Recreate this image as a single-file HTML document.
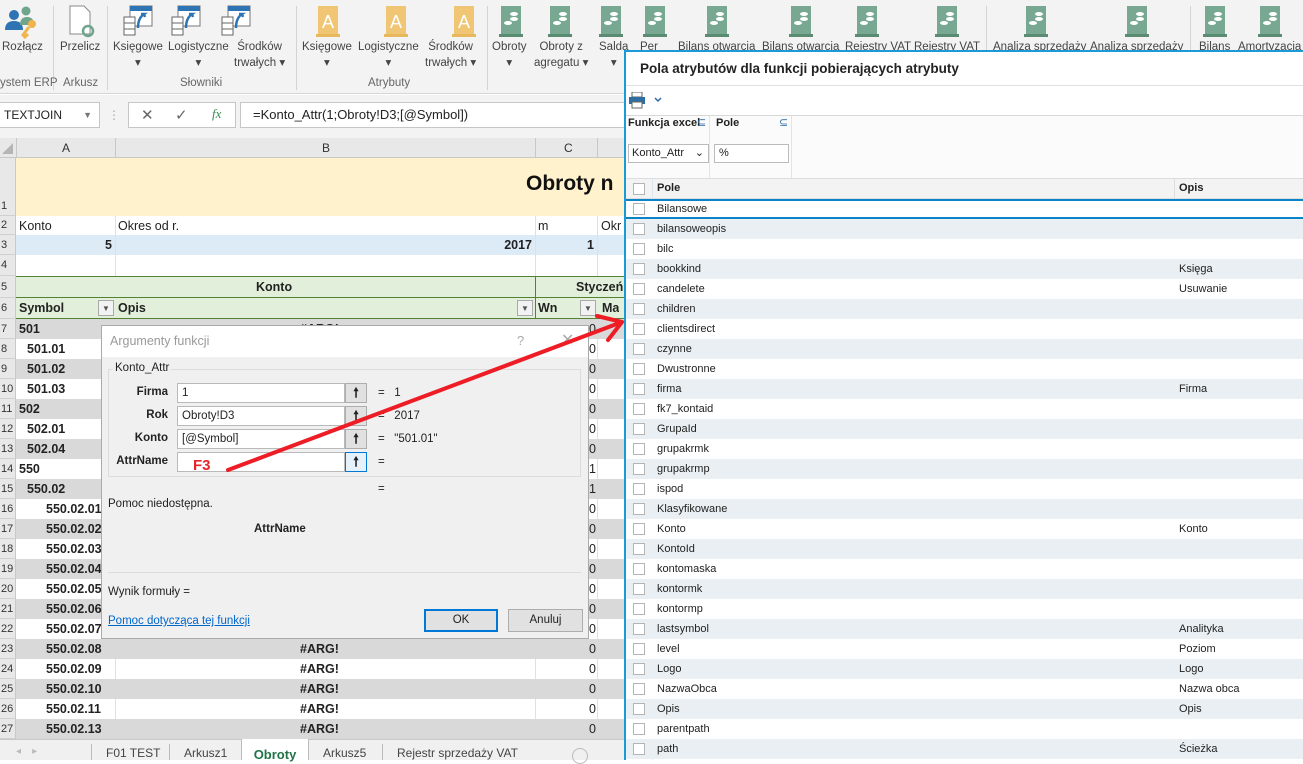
<!DOCTYPE html>
<html><head><meta charset="utf-8"><style>
*{box-sizing:border-box;margin:0;padding:0}
body{width:1303px;height:760px;overflow:hidden;position:relative;background:#fff;font-family:"Liberation Sans",sans-serif;font-size:12px;color:#222}
.a{position:absolute}
.rl{position:absolute;font-size:11.5px;color:#444;text-align:center;white-space:nowrap;line-height:16px}
.sep{position:absolute;top:6px;width:1px;height:84px;background:#d4d4d4}
.cell{position:absolute;height:20px;line-height:20px;font-weight:bold;font-size:12.5px;white-space:nowrap;overflow:hidden}
.rh{position:absolute;left:0;width:16px;font-size:11px;color:#333;background:#e8e8e8;border-right:1px solid #c8c8c8;border-bottom:1px solid #d0d0d0;text-align:left;padding-left:1px}
.prow{position:absolute;left:626px;width:677px;height:20px;line-height:20px;font-size:11px;color:#222}
.cb{position:absolute;left:7px;top:4px;width:12px;height:12px;border:1px solid #b5b5b5;background:#fff}
.fl{position:absolute;font-size:11.5px;text-align:right;font-weight:bold;width:60px}
.inp{position:absolute;left:177px;width:168px;height:20px;background:#fff;border:1px solid #b9b9b9;font-size:11.5px;line-height:18px;padding-left:4px}
.btn{position:absolute;left:345px;width:22px;height:20px;background:#e1e1e1;border:1px solid #adadad;font-size:13px;text-align:center;line-height:18px;font-weight:bold}
.eq{position:absolute;left:378px;font-size:11.5px}
</style></head><body>

<!-- Ribbon -->
<div class="a" style="left:0;top:0;width:1303px;height:94px;background:#f3f3f3;border-bottom:1px solid #d6d6d6"></div>
<div class="sep" style="left:53px"></div><div class="sep" style="left:107px"></div><div class="sep" style="left:296px"></div><div class="sep" style="left:487px"></div><div class="sep" style="left:986px"></div><div class="sep" style="left:1190px"></div>
<svg class="a" style="left:0;top:0" width="1303" height="46">
 <circle cx="14" cy="15" r="5" fill="#2e74b5"/><path d="M5 30 q0-9 9-9 q9 0 9 9z" fill="#2e74b5"/>
 <circle cx="26" cy="11" r="4.5" fill="#6fa58c"/><path d="M20 25 q0-8 7-8 q7 0 7 8z" fill="#6fa58c"/>
 <circle cx="32" cy="24" r="4" fill="#f1b44c"/><path d="M29 27 l-6 8 l2 2 l3-3" stroke="#f1b44c" stroke-width="3" fill="none"/>
 <path d="M70 6 h14 l6 6 v22 h-20z" fill="#fff" stroke="#888"/><circle cx="88" cy="31" r="5" fill="none" stroke="#6fa58c" stroke-width="2.5"/>
 <g id="t"><rect x="130" y="6" width="22" height="20" fill="#fff" stroke="#777"/><rect x="130" y="6" width="22" height="5" fill="#2e74b5"/><rect x="124" y="17" width="11" height="18" fill="#fff" stroke="#666"/><path d="M124 23h11M124 29h11" stroke="#666"/><path d="M138 28 q0-10 6-14 l-3 0 m3 0 l1 3" stroke="#2e74b5" stroke-width="2.5" fill="none"/></g>
 <use href="#t" x="48"/><use href="#t" x="98"/>
 <g id="y"><rect x="318" y="6" width="20" height="28" fill="#f0c674"/><rect x="316" y="34" width="24" height="3" fill="#e8b85e"/><text x="322" y="28" fill="#fff" font-size="18" font-family="Liberation Sans">A</text></g>
 <use href="#y" x="68"/><use href="#y" x="136"/>
 <g id="g"><rect x="501" y="6" width="20" height="28" fill="#78a892"/><rect x="499" y="34" width="24" height="3" fill="#5c8b74"/><ellipse cx="514" cy="14" rx="4" ry="2" fill="#fff"/><ellipse cx="514" cy="19" rx="4" ry="2" fill="#fff"/><ellipse cx="508" cy="23" rx="4" ry="2" fill="#fff"/></g>
 <use href="#g" x="49"/><use href="#g" x="100"/><use href="#g" x="144"/><use href="#g" x="206"/><use href="#g" x="290"/><use href="#g" x="356"/><use href="#g" x="436"/><use href="#g" x="525"/><use href="#g" x="626"/><use href="#g" x="704"/><use href="#g" x="759"/>
</svg>
<div class="rl" style="left:2px;top:39px">Rozłącz</div>
<div class="rl" style="left:60px;top:39px">Przelicz</div>
<div class="rl" style="left:113px;top:39px">Księgowe<br>▾</div>
<div class="rl" style="left:168px;top:39px">Logistyczne<br>▾</div>
<div class="rl" style="left:234px;top:39px">Środków<br>trwałych ▾</div>
<div class="rl" style="left:302px;top:39px">Księgowe<br>▾</div>
<div class="rl" style="left:358px;top:39px">Logistyczne<br>▾</div>
<div class="rl" style="left:425px;top:39px">Środków<br>trwałych ▾</div>
<div class="rl" style="left:492px;top:39px">Obroty<br>▾</div>
<div class="rl" style="left:534px;top:39px">Obroty z<br>agregatu ▾</div>
<div class="rl" style="left:599px;top:39px">Salda<br>▾</div>
<div class="rl" style="left:0;top:75px;color:#666">ystem ERP</div>
<div class="rl" style="left:63px;top:75px;color:#666">Arkusz</div>
<div class="rl" style="left:180px;top:75px;color:#666">Słowniki</div>
<div class="rl" style="left:368px;top:75px;color:#666">Atrybuty</div>
<div class="rl" style="left:640px;top:39px">Per</div><div class="rl" style="left:678px;top:39px">Bilans otwarcia</div><div class="rl" style="left:762px;top:39px">Bilans otwarcia</div><div class="rl" style="left:845px;top:39px">Rejestry VAT</div><div class="rl" style="left:914px;top:39px">Rejestry VAT</div><div class="rl" style="left:993px;top:39px">Analiza sprzedaży</div><div class="rl" style="left:1090px;top:39px">Analiza sprzedaży</div><div class="rl" style="left:1199px;top:39px">Bilans</div><div class="rl" style="left:1238px;top:39px">Amortyzacja</div>

<!-- formula bar -->
<div class="a" style="left:0;top:95px;width:1303px;height:43px;background:#f3f3f3"></div>
<div class="a" style="left:-2px;top:102px;width:102px;height:26px;background:#fff;border:1px solid #c6c6c6;font-size:12px;line-height:24px;padding-left:5px">TEXTJOIN<span style="position:absolute;right:7px;color:#777;font-size:9px">▼</span></div>
<div class="a" style="left:108px;top:108px;color:#aaa;font-size:12px">⋮</div>
<div class="a" style="left:128px;top:102px;width:108px;height:26px;background:#fff;border:1px solid #c6c6c6"></div>
<div class="a" style="left:141px;top:106px;color:#666;font-size:15px">✕</div>
<div class="a" style="left:175px;top:106px;color:#666;font-size:15px">✓</div>
<div class="a" style="left:212px;top:106px;color:#3b8a4e;font-size:13px;font-style:italic;font-family:'Liberation Serif',serif">fx</div>
<div class="a" style="left:240px;top:102px;width:400px;height:26px;background:#fff;border:1px solid #c6c6c6;font-size:13px;line-height:24px;padding-left:12px">=Konto_Attr(1;Obroty!D3;[@Symbol])</div>

<!-- grid -->
<div class="a" style="left:0;top:138px;width:626px;height:20px;background:#e8e8e8;border-bottom:1px solid #c8c8c8"></div>
<div class="a" style="left:16px;top:138px;width:1px;height:20px;background:#c8c8c8"></div>
<div class="a" style="left:115px;top:138px;width:1px;height:20px;background:#c8c8c8"></div>
<div class="a" style="left:535px;top:138px;width:1px;height:20px;background:#c8c8c8"></div>
<div class="a" style="left:597px;top:138px;width:1px;height:20px;background:#c8c8c8"></div>
<div class="a" style="left:62px;top:141px;font-size:12px;color:#333">A</div>
<div class="a" style="left:322px;top:141px;font-size:12px;color:#333">B</div>
<div class="a" style="left:564px;top:141px;font-size:12px;color:#333">C</div>
<div class="a" style="left:2px;top:143px;width:0;height:0;border-left:11px solid transparent;border-bottom:11px solid #b5b5b5"></div>

<div class="a" style="left:16px;top:158px;width:610px;height:58px;background:#fff2cc"></div>
<div class="a" style="left:526px;top:172px;font-size:21px;font-weight:bold;color:#111">Obroty n</div>
<div class="cell" style="left:19px;top:216px;font-weight:normal">Konto</div>
<div class="cell" style="left:118px;top:216px;font-weight:normal">Okres od r.</div>
<div class="cell" style="left:538px;top:216px;font-weight:normal">m</div>
<div class="cell" style="left:601px;top:216px;font-weight:normal">Okr</div>
<div class="a" style="left:16px;top:235px;width:610px;height:20px;background:#ddebf7"></div>
<div class="cell" style="left:16px;top:235px;width:96px;text-align:right">5</div>
<div class="cell" style="left:116px;top:235px;width:416px;text-align:right">2017</div>
<div class="cell" style="left:536px;top:235px;width:58px;text-align:right">1</div>
<div class="a" style="left:115px;top:216px;width:1px;height:60px;background:#e0e0e0"></div>
<div class="a" style="left:535px;top:216px;width:1px;height:60px;background:#e0e0e0"></div>
<div class="a" style="left:597px;top:216px;width:1px;height:60px;background:#e0e0e0"></div>
<div class="a" style="left:16px;top:276px;width:610px;height:43px;background:#e2efda;border-top:1px solid #548235;border-bottom:1px solid #548235"></div>
<div class="a" style="left:535px;top:276px;width:1px;height:43px;background:#548235"></div>
<div class="a" style="left:16px;top:297px;width:610px;height:1px;background:#548235"></div>
<div class="cell" style="left:256px;top:277px">Konto</div>
<div class="cell" style="left:576px;top:277px">Styczeń</div>
<div class="cell" style="left:19px;top:298px">Symbol</div>
<div class="cell" style="left:118px;top:298px">Opis</div>
<div class="cell" style="left:538px;top:298px">Wn</div>
<div class="cell" style="left:602px;top:298px">Ma</div>
<div class="a" style="left:98px;top:300px;width:16px;height:16px;border:1px solid #aaa;background:#f2f2f2;font-size:8px;text-align:center;line-height:15px;color:#555">▼</div>
<div class="a" style="left:517px;top:300px;width:16px;height:16px;border:1px solid #aaa;background:#f2f2f2;font-size:8px;text-align:center;line-height:15px;color:#555">▼</div>
<div class="a" style="left:580px;top:300px;width:16px;height:16px;border:1px solid #aaa;background:#f2f2f2;font-size:8px;text-align:center;line-height:15px;color:#555">▼</div>

<div id="rows"></div>
<div class="rh" style="top:158px;height:58px;padding-top:42px">1</div>
<div class="rh" style="top:216px;height:19px;line-height:19px">2</div>
<div class="rh" style="top:235px;height:20px;line-height:20px">3</div>
<div class="rh" style="top:255px;height:21px;line-height:21px">4</div>
<div class="rh" style="top:276px;height:22px;line-height:22px">5</div>
<div class="rh" style="top:298px;height:21px;line-height:21px">6</div>
<script>
var s=["501","501.01","501.02","501.03","502","502.01","502.04","550","550.02","550.02.01","550.02.02","550.02.03","550.02.04","550.02.05","550.02.06","550.02.07","550.02.08","550.02.09","550.02.10","550.02.11","550.02.13"];
var h="";
for(var i=0;i<21;i++){var y=319+i*20,r=i+7,g=(i%2==0);
var ind=s[i].length<=3?3:(s[i].length<=6?11:30);
h+='<div class="a" style="left:16px;top:'+y+'px;width:610px;height:20px;background:'+(g?'#d9d9d9':'#fff')+'"></div>';
if(!g)h+='<div class="a" style="left:115px;top:'+y+'px;width:1px;height:20px;background:#e0e0e0"></div><div class="a" style="left:535px;top:'+y+'px;width:1px;height:20px;background:#e0e0e0"></div><div class="a" style="left:597px;top:'+y+'px;width:1px;height:20px;background:#e0e0e0"></div>';
h+='<div class="rh" style="top:'+y+'px;height:20px;line-height:20px">'+r+'</div>';
h+='<div class="cell" style="left:'+(16+ind)+'px;top:'+y+'px;width:'+(99-ind)+'px">'+s[i]+'</div>';
h+='<div class="cell" style="left:300px;top:'+y+'px">#ARG!</div>';
h+='<div class="cell" style="left:536px;top:'+y+'px;width:60px;text-align:right;font-weight:normal">'+((r==14||r==15)?'1':'0')+'</div>';
}
document.getElementById("rows").innerHTML=h;
</script>
<div class="a" style="left:0;top:739px;width:626px;height:21px;background:#f0f0f0;border-top:1px solid #c8c8c8"></div>
<div class="a" style="left:16px;top:746px;color:#bbb;font-size:10px">◂ &nbsp;&nbsp; ▸</div>
<div class="a" style="left:91px;top:744px;height:16px;border-left:1px solid #bbb;padding:2px 14px;font-size:12px;color:#444">F01 TEST</div>
<div class="a" style="left:169px;top:744px;height:16px;border-left:1px solid #bbb;padding:2px 14px;font-size:12px;color:#444">Arkusz1</div>
<div class="a" style="left:241px;top:739px;width:68px;height:21px;background:#fff;border-left:1px solid #bbb;border-right:1px solid #bbb;text-align:center;padding-top:8px;font-size:13px;font-weight:bold;color:#217346">Obroty</div>
<div class="a" style="left:309px;top:744px;height:16px;padding:2px 14px;font-size:12px;color:#444">Arkusz5</div>
<div class="a" style="left:382px;top:744px;height:16px;border-left:1px solid #bbb;padding:2px 14px;font-size:12px;color:#444">Rejestr sprzedaży VAT</div>
<div class="a" style="left:572px;top:748px;width:16px;height:16px;border-radius:50%;border:1px solid #bbb"></div>

<!-- Dialog -->
<div class="a" style="left:101px;top:325px;width:488px;height:314px;background:#f0f0f0;border:1px solid #aaa"></div>
<div class="a" style="left:102px;top:326px;width:486px;height:31px;background:#fff"></div>
<div class="a" style="left:110px;top:334px;font-size:12.5px;color:#999">Argumenty funkcji</div>
<div class="a" style="left:517px;top:333px;font-size:13px;color:#aaa">?</div>
<div class="a" style="left:561px;top:330px;font-size:16px;color:#aaa">✕</div>
<div class="a" style="left:108px;top:369px;width:473px;height:108px;border:1px solid #dcdcdc"></div>
<div class="a" style="left:113px;top:362px;font-size:11.5px;background:#f0f0f0;padding:0 2px">Konto_Attr</div>
<div class="fl" style="left:108px;top:386px">Firma</div>
<div class="fl" style="left:108px;top:409px">Rok</div>
<div class="fl" style="left:108px;top:432px">Konto</div>
<div class="fl" style="left:108px;top:455px">AttrName</div>
<div class="inp" style="top:383px">1</div><div class="btn" style="top:383px">🠕</div>
<div class="inp" style="top:406px">Obroty!D3</div><div class="btn" style="top:406px">🠕</div>
<div class="inp" style="top:429px">[@Symbol]</div><div class="btn" style="top:429px">🠕</div>
<div class="inp" style="top:452px"></div><div class="btn" style="top:452px;border-color:#0078d7;background:#e5f1fb">🠕</div>
<div class="eq" style="top:387px">= &nbsp;&nbsp;1</div>
<div class="eq" style="top:410px">= &nbsp;&nbsp;2017</div>
<div class="eq" style="top:433px">= &nbsp;&nbsp;"501.01"</div>
<div class="eq" style="top:456px">=</div>
<div class="eq" style="top:483px">=</div>
<div class="a" style="left:108px;top:498px;font-size:11.5px">Pomoc niedostępna.</div>
<div class="a" style="left:254px;top:523px;font-size:11.5px;font-weight:bold">AttrName</div>
<div class="a" style="left:108px;top:572px;width:473px;height:1px;background:#dcdcdc"></div>
<div class="a" style="left:108px;top:586px;font-size:11.5px">Wynik formuły =</div>
<div class="a" style="left:108px;top:615px;font-size:11.5px;color:#0066cc;text-decoration:underline">Pomoc dotycząca tej funkcji</div>
<div class="a" style="left:424px;top:609px;width:74px;height:23px;border:2px solid #0078d7;background:#e1e1e1;text-align:center;line-height:19px;font-size:11.5px">OK</div>
<div class="a" style="left:508px;top:609px;width:75px;height:23px;border:1px solid #adadad;background:#e1e1e1;text-align:center;line-height:21px;font-size:11.5px">Anuluj</div>
<div class="a" style="left:193px;top:457px;font-size:15px;font-weight:bold;color:#e8232a">F3</div>

<!-- Right panel -->
<div class="a" style="left:624px;top:50px;width:679px;height:710px;background:#fff;border-left:2px solid #1a9bd7;border-top:2px solid #1a9bd7"></div>
<div class="a" style="left:640px;top:61px;font-size:13.5px;font-weight:bold;color:#222">Pola atrybutów dla funkcji pobierających atrybuty</div>
<div class="a" style="left:626px;top:85px;width:677px;height:1px;background:#e0e0e0"></div>
<svg class="a" style="left:629px;top:92px" width="36" height="18"><rect x="3" y="0" width="10" height="5" fill="#fff" stroke="#666"/><rect x="0" y="5" width="16" height="7" fill="#2e6da4"/><rect x="3" y="10" width="10" height="6" fill="#fff" stroke="#666"/><path d="M26 6 l3 3 l3-3" stroke="#2e6da4" stroke-width="1.5" fill="none"/></svg>
<div class="a" style="left:626px;top:115px;width:677px;height:1px;background:#d8d8d8"></div>
<div class="a" style="left:626px;top:116px;width:677px;height:62px;background:#fbfbfb"></div>
<div class="a" style="left:709px;top:116px;width:1px;height:62px;background:#e4e4e4"></div>
<div class="a" style="left:791px;top:116px;width:1px;height:62px;background:#e4e4e4"></div>
<div class="a" style="left:628px;top:117px;font-size:11px;font-weight:bold;width:72px;overflow:hidden;white-space:nowrap">Funkcja excel</div>
<div class="a" style="left:697px;top:116px;font-size:11px;color:#2e6da4">⊆</div>
<div class="a" style="left:716px;top:117px;font-size:11px;font-weight:bold">Pole</div>
<div class="a" style="left:779px;top:116px;font-size:11px;color:#2e6da4">⊆</div>
<div class="a" style="left:628px;top:144px;width:81px;height:19px;border:1px solid #bbb;background:#fff;font-size:11px;line-height:17px;padding-left:3px">Konto_Attr<span style="position:absolute;right:4px">⌄</span></div>
<div class="a" style="left:714px;top:144px;width:75px;height:19px;border:1px solid #bbb;background:#fff;font-size:11px;line-height:17px;padding-left:4px">%</div>
<div class="a" style="left:626px;top:178px;width:677px;height:21px;background:#f3f3f3;border-top:1px solid #ddd;border-bottom:1px solid #ddd"></div>
<div class="a" style="left:652px;top:178px;width:1px;height:582px;background:#dde6ee"></div>
<div class="a" style="left:1174px;top:178px;width:1px;height:21px;background:#ddd"></div>
<div class="a" style="left:633px;top:183px;width:12px;height:12px;border:1px solid #b5b5b5;background:#fff"></div>
<div class="a" style="left:657px;top:182px;font-size:11px;font-weight:bold">Pole</div>
<div class="a" style="left:1179px;top:182px;font-size:11px;font-weight:bold">Opis</div>
<div id="pr"></div>
<script>
var p=[["Bilansowe",""],["bilansoweopis",""],["bilc",""],["bookkind","Księga"],["candelete","Usuwanie"],["children",""],["clientsdirect",""],["czynne",""],["Dwustronne",""],["firma","Firma"],["fk7_kontaid",""],["GrupaId",""],["grupakrmk",""],["grupakrmp",""],["ispod",""],["Klasyfikowane",""],["Konto","Konto"],["KontoId",""],["kontomaska",""],["kontormk",""],["kontormp",""],["lastsymbol","Analityka"],["level","Poziom"],["Logo","Logo"],["NazwaObca","Nazwa obca"],["Opis","Opis"],["parentpath",""],["path","Ścieżka"]];
var h="";
for(var i=0;i<p.length;i++){var y=199+i*20;var bg=(i>0&&i%2==1)?'#e9eff3':'#fff';
h+='<div class="prow" style="top:'+y+'px;background:'+bg+'"><div class="cb"></div><div class="a" style="left:31px;top:0">'+p[i][0]+'</div><div class="a" style="left:553px;top:0">'+p[i][1]+'</div></div>';}
document.getElementById("pr").innerHTML=h;
</script>
<div class="a" style="left:626px;top:199px;width:677px;height:20px;border-top:2px solid #0a84c6;border-bottom:2px solid #0a84c6"></div>

<!-- red arrow -->
<svg class="a" style="left:0;top:0;pointer-events:none" width="1303" height="760">
<path d="M228 470 L622 322 M622 322 L597 316 M622 322 L608 340" stroke="#ee1c25" stroke-width="4" fill="none" stroke-linecap="round"/>
</svg>
</body></html>
